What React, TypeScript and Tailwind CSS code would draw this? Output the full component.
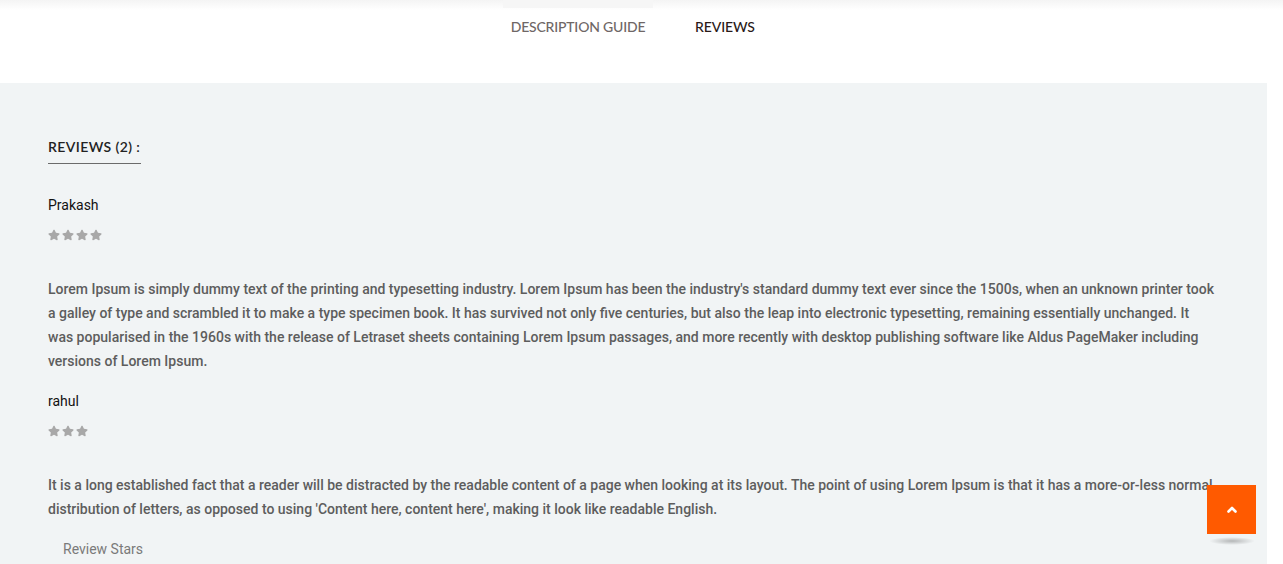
import { FaStar } from "react-icons/fa";

const reviews = [
	{
		name: "Prakash",
		stars: 4,
		text: "Lorem Ipsum is simply dummy text of the printing and typesetting industry. Lorem Ipsum has been the industry's standard dummy text ever since the 1500s, when an unknown printer took a galley of type and scrambled it to make a type specimen book. It has survived not only five centuries, but also the leap into electronic typesetting, remaining essentially unchanged. It was popularised in the 1960s with the release of Letraset sheets containing Lorem Ipsum passages, and more recently with desktop publishing software like Aldus PageMaker including versions of Lorem Ipsum.",
	},
	{
		name: "rahul",
		stars: 3,
		text: "It is a long established fact that a reader will be distracted by the readable content of a page when looking at its layout. The point of using Lorem Ipsum is that it has a more-or-less normal distribution of letters, as opposed to using 'Content here, content here', making it look like readable English.",
	},
];

const Stars = ({ count }: { count: number }) => {
	return (
		<div className="flex gap-[2px] text-[#a8a8a8]">
			{Array.from({ length: count }).map((_, i) => (
				<FaStar key={i} size={12} />
			))}
		</div>
	);
};

const Review = ({ name, stars, text }: { name: string; stars: number; text: string }) => {
	return (
		<div className="flex flex-col">
			<span className="text-[14px] leading-[20px] text-[#111]">{name}</span>
			<div className="mt-[14px] h-[12px]">
				<Stars count={stars} />
			</div>
			<p className="mt-[36px] text-[14px] leading-[24px] font-medium text-[#5d5d5d]">{text}</p>
		</div>
	);
};

const App = () => {
	return (
		<div className="w-[1283px] h-[564px] overflow-hidden bg-white font-['Roboto',sans-serif] relative">
			<div className="h-[83px] bg-gradient-to-b from-[#f4f4f4] to-white to-[10px] flex pl-[503px]">
				<div className="flex flex-col items-center w-[150px]">
					<div className="h-[8px] w-full bg-[#f6f6f6]" />
					<span className="mt-[11px] text-[14px] leading-[16px] font-medium text-[#6f6766] font-['Lato',sans-serif] tracking-[-0.2px]">DESCRIPTION GUIDE</span>
				</div>
				<div className="ml-[42px] flex flex-col items-start">
					<span className="mt-[19px] text-[14px] leading-[16px] font-medium text-[#2a1a18] font-['Lato',sans-serif] tracking-[-0.1px]">REVIEWS</span>
				</div>
			</div>
			<div className="w-[1267px] bg-[#f1f4f5] h-[481px] pl-[48px] pr-[50px] pt-[52px]">
				<div className="inline-flex flex-col">
					<span className="text-[14px] leading-[20px] font-semibold text-[#222] font-['Lato',sans-serif] tracking-[0.4px]">REVIEWS (2) :</span>
					<div className="mt-[6px] h-px bg-[#6b6b6b] w-[93px]" />
				</div>
				<div className="mt-[31px] flex flex-col gap-[18px]">
					{reviews.map((r, i) => (
						<Review key={i} {...r} />
					))}
				</div>
				<div className="mt-[18px] pl-[15px] text-[14px] leading-[20px] text-[#7a7a7a]">Review Stars</div>
			</div>
			<div className="absolute left-[1207px] top-[485px] flex flex-col items-center">
				<div className="w-[49px] h-[49px] bg-[#ff5a00] flex items-center justify-center">
					<svg width="10" height="7" viewBox="0 0 10 7">
						<polyline points="1.5,5.5 5,2 8.5,5.5" fill="none" stroke="white" strokeWidth="2.6" strokeLinecap="round" strokeLinejoin="round" />
					</svg>
				</div>
				<div className="mt-[3px] w-[46px] h-[8px] rounded-[50%] bg-[radial-gradient(ellipse_at_center,rgba(0,0,0,0.25),rgba(0,0,0,0)_70%)]" />
			</div>
		</div>
	);
};

export default App;
